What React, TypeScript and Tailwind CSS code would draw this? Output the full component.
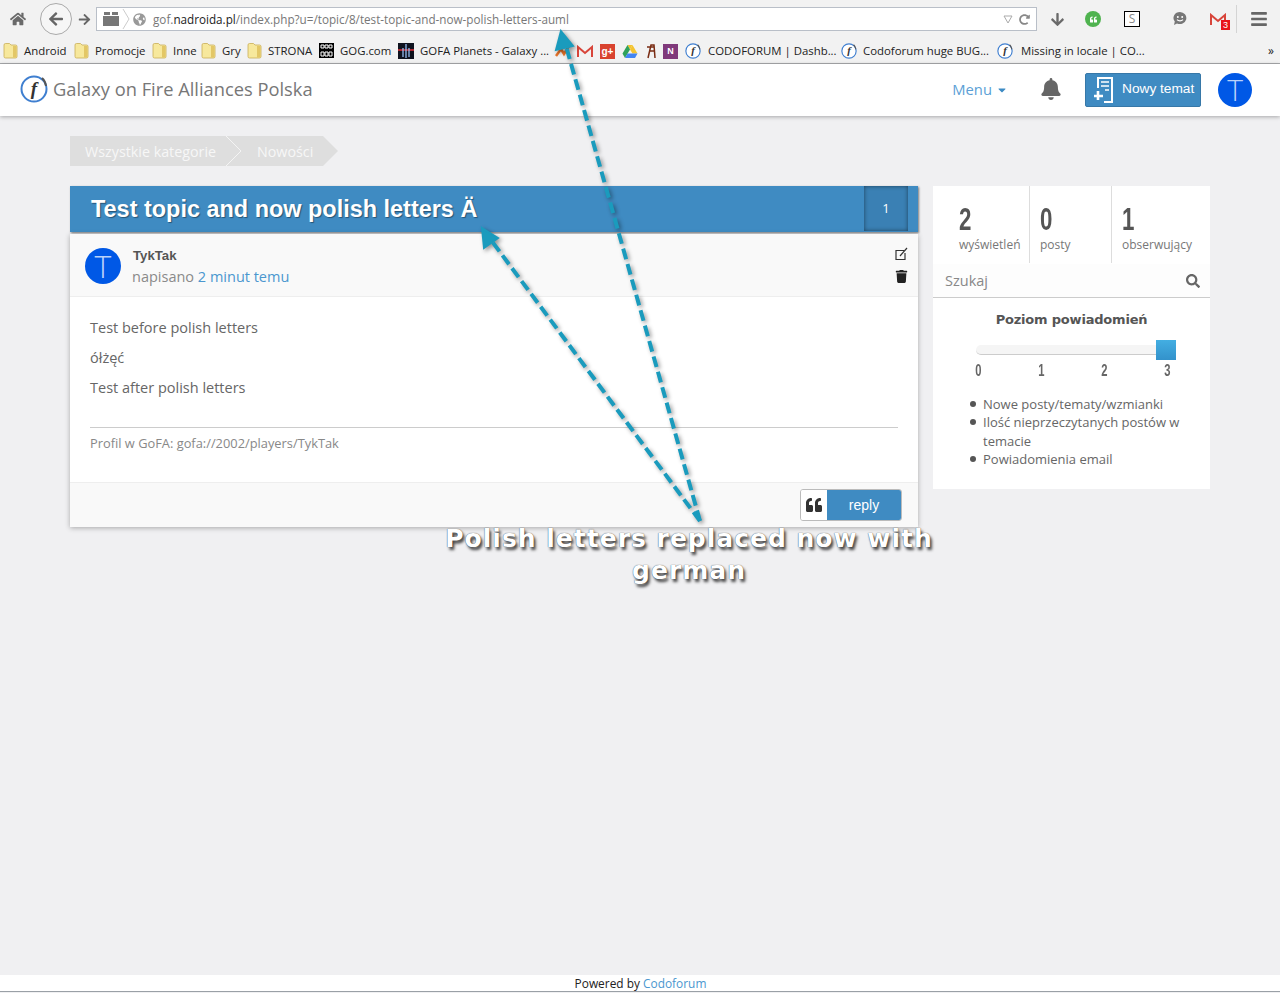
import React from 'react';
import { FaHome, FaArrowLeft, FaArrowRight, FaArrowDown, FaBell, FaSearch, FaTrash, FaQuoteLeft, FaBars, FaGlobeAmericas, FaCaretDown, FaRedoAlt } from 'react-icons/fa';

function Folder() {
  return (
    <svg width="15" height="17" viewBox="0 0 15 17" className="shrink-0">
      <path d="M1 3 Q1 1.5 2.5 1.5 H6.5 L8 3 H12.5 Q14 3 14 4.5 V14.5 Q14 16 12.5 16 H2.5 Q1 16 1 14.5 Z" fill="#f7e89c" stroke="#c9ad55" strokeWidth="0.8" />
      <path d="M10 4 H13.5 V15.5 H10 Z" fill="#e3c766" />
    </svg>
  );
}

function FIcon({ size = 16 }: { size?: number }) {
  return (
    <svg width={size} height={size} viewBox="0 0 28 28" className="shrink-0">
      <circle cx="14" cy="14" r="12.5" fill="#fff" stroke="#3f7fd0" strokeWidth="2" />
      <path d="M22 3 A12.5 12.5 0 0 1 26 11" fill="none" stroke="#555" strokeWidth="2" />
      <text x="14" y="20" textAnchor="middle" fontFamily="'Liberation Serif', serif" fontStyle="italic" fontWeight="700" fontSize="19" fill="#333">f</text>
    </svg>
  );
}

function GogIcon() {
  return (
    <svg width="15" height="15" viewBox="0 0 15 15" className="shrink-0">
      <rect width="15" height="15" fill="#000" />
      <path d="M2 2h3v3H2zM6 2h3v3H6zM10 2h3v3h-3zM2 9h3v4H2zM6 9h3v4H6zM10 9h3v4h-3z" fill="none" stroke="#fff" strokeWidth="1" />
    </svg>
  );
}

function GofaIcon() {
  return (
    <svg width="16" height="16" viewBox="0 0 16 16" className="shrink-0">
      <rect width="16" height="16" fill="#10131f" />
      <path d="M0 7h16" stroke="#e0323a" strokeWidth="1.5" />
      <path d="M8 1v14M5 5v9M11 5v9" stroke="#9fc8ff" strokeWidth="1.2" />
    </svg>
  );
}

function GmailIcon() {
  return (
    <svg width="16" height="13" viewBox="0 0 16 13" className="shrink-0">
      <path d="M1 12V2l7 6 7-6v10" fill="none" stroke="#d8453a" strokeWidth="2" />
    </svg>
  );
}

function Bookmark({ icon, label, w }: { icon: React.ReactNode; label: string; w: string }) {
  return (
    <div className={`flex items-center gap-[6px] ${w}`}>
      {icon}
      <span className="whitespace-nowrap">{label}</span>
    </div>
  );
}

function BrowserChrome() {
  return (
    <div className="h-[64px] bg-[#f2f2f2] border-b border-[#a9abad] font-['Open_Sans',sans-serif]">
      <div className="h-[38px] flex items-center">
        <FaHome className="ml-[10px] text-[#6a6a6a] text-[16px]" />
        <div className="ml-[14px] w-[32px] h-[32px] rounded-full border border-[#aaa] bg-[#f6f6f6] flex items-center justify-center">
          <FaArrowLeft className="text-[#666] text-[16px]" />
        </div>
        <FaArrowRight className="ml-[6px] text-[#666] text-[13px]" />
        <div className="ml-[5px] w-[941px] h-[24px] bg-white border border-[#b9bfc8] flex items-center text-[11.7px]">
          <svg width="16" height="14" viewBox="0 0 16 14" className="ml-[6px] shrink-0"><path d="M0 4h16v10H0zM1 0h6v3H1zM9 0h6v3H9z" fill="#777" /></svg>
          <svg width="8" height="22" viewBox="0 0 8 22" className="ml-[3px] shrink-0"><path d="M1 1l6 10-6 10" fill="none" stroke="#ccc" /></svg>
          <FaGlobeAmericas className="ml-[3px] text-[#999] text-[13px]" />
          <span className="ml-[7px] mt-[1px] whitespace-nowrap text-[#777]">gof.<span className="text-[#222]">nadroida.pl</span>/index.php?u=/topic/8/test-topic-and-now-polish-letters-auml</span>
          <svg width="10" height="9" viewBox="0 0 10 9" className="ml-auto shrink-0"><path d="M1 1h8L5 8z" fill="none" stroke="#aaa" /></svg>
          <FaRedoAlt className="ml-[6px] mr-[6px] text-[#888] text-[11px]" />
        </div>
        <FaArrowDown className="ml-[13px] text-[#6a6a6a] text-[15px]" />
        <div className="ml-[20px] w-[16px] h-[16px] rounded-full bg-[#4fb34f] flex items-center justify-center">
          <FaQuoteLeft className="text-white text-[7px]" />
        </div>
        <div className="ml-[23px] w-[16px] h-[16px] border border-black bg-white flex items-center justify-center text-[12px] leading-none text-[#888]">S</div>
        <svg width="16" height="16" viewBox="0 0 16 16" className="ml-[32px] shrink-0">
          <path d="M8 1a6.5 6 0 1 1-3 11.4L2 14l.8-3.4A6.5 6 0 0 1 8 1z" fill="#777" />
          <circle cx="5.8" cy="6" r="1" fill="#fff" /><circle cx="10.2" cy="6" r="1" fill="#fff" />
          <path d="M5 8.7c1.5 1.6 4.5 1.6 6 0" fill="none" stroke="#fff" strokeWidth="1.2" />
        </svg>
        <div className="relative ml-[22px]">
          <GmailIcon />
          <span className="absolute -right-[4px] -bottom-[4px] bg-[#e8141c] text-white text-[9px] leading-[10px] px-[2px] font-['Liberation_Sans']">3</span>
        </div>
        <div className="ml-[10px] w-px h-[28px] bg-[#d4d4d4]" />
        <FaBars className="ml-[13px] text-[#666] text-[18px]" />
      </div>
      <div className="h-[25px] flex items-center pt-[1px] text-[11.4px] text-[#222] pl-[3px] relative">
        <Bookmark icon={<Folder />} label="Android" w="w-[71px]" />
        <Bookmark icon={<Folder />} label="Promocje" w="w-[78px]" />
        <Bookmark icon={<Folder />} label="Inne" w="w-[49px]" />
        <Bookmark icon={<Folder />} label="Gry" w="w-[46px]" />
        <Bookmark icon={<Folder />} label="STRONA" w="w-[72px]" />
        <Bookmark icon={<GogIcon />} label="GOG.com" w="w-[79px]" />
        <Bookmark icon={<GofaIcon />} label="GOFA Planets - Galaxy ..." w="w-[157px]" />
        <div className="flex items-center gap-[7px]">
          <svg width="15" height="15" viewBox="0 0 15 15" className="shrink-0"><path d="M1 12L6 5l3 5 5-8" fill="none" stroke="#e8742a" strokeWidth="2.5" /></svg>
          <GmailIcon />
          <div className="w-[15px] h-[15px] bg-[#d9432f] text-white text-[10px] leading-[15px] text-center font-['Liberation_Sans'] font-bold">g+</div>
          <svg width="16" height="15" viewBox="0 0 16 15" className="shrink-0">
            <path d="M5.5 1h5L8 5.5 5.5 1z" fill="#f4c430" />
            <path d="M10.5 1L15.5 9.5h-5L8 5.5z" fill="#f4c430" />
            <path d="M5.5 1L8 5.5 3 14 .5 9.5z" fill="#2fa15a" />
            <path d="M3 14h10l2.5-4.5h-10z" fill="#4285f4" />
          </svg>
          <svg width="10" height="15" viewBox="0 0 10 15" className="ml-[1px] shrink-0"><path d="M2 14L5 1h3l1 13M3 7h5M1 3h7" fill="none" stroke="#7a2d14" strokeWidth="1.5" /></svg>
          <div className="w-[15px] h-[15px] bg-[#80397b] text-white text-[9px] leading-[15px] text-center font-bold font-['Liberation_Sans']">N</div>
          <FIcon />
        </div>
        <span className="ml-[7px] w-[133px] whitespace-nowrap">CODOFORUM | Dashb...</span>
        <FIcon />
        <span className="ml-[6px] w-[134px] whitespace-nowrap">Codoforum huge BUG...</span>
        <FIcon />
        <span className="ml-[8px] whitespace-nowrap">Missing in locale | CO...</span>
        <span className="ml-auto mr-[6px] text-[12px]">»</span>
      </div>
    </div>
  );
}

function ForumNav() {
  return (
    <div className="h-[52px] bg-white shadow-[0_1px_4px_rgba(0,0,0,0.3)] flex items-center font-['Open_Sans',sans-serif] relative">
      <div className="ml-[20px] mb-[2px]"><FIcon size={28} /></div>
      <span className="ml-[5px] mb-[2px] text-[18.3px] text-[#777]">Galaxy on Fire Alliances Polska</span>
      <div className="ml-auto flex items-center">
        <span className="mb-[2px] text-[14.8px] text-[#5b9fd6]">Menu</span>
        <FaCaretDown className="ml-[4px] text-[#3d8bc4] text-[12px]" />
        <FaBell className="ml-[32px] mb-[2px] text-[#666] text-[22px]" />
        <button className="ml-[23px] w-[116px] h-[34px] rounded-[2px] bg-[#3f8bc2] border border-[#3778a8] flex items-center text-white font-['Liberation_Sans',sans-serif] text-[13.7px]">
          <svg width="24" height="28" viewBox="0 0 24 28" className="ml-[6px] shrink-0">
            <path d="M6 12V2h14v24h-8" fill="none" stroke="#fff" strokeWidth="2" />
            <path d="M9 6h8M9 10h8M13 14h4" stroke="#fff" strokeWidth="1.6" />
            <path d="M6 15v9M2 20h9" stroke="#fff" strokeWidth="2.6" />
          </svg>
          <span className="ml-[6px] mb-[2px] whitespace-nowrap">Nowy temat</span>
        </button>
        <Avatar size="w-[34px] h-[34px] text-[30px] ml-[17px] mr-[28px]" />
      </div>
    </div>
  );
}

function Avatar({ size }: { size: string }) {
  return (
    <div className={`${size} shrink-0 rounded-full bg-[#0058e6] text-[#b9d2fa] flex items-center justify-center font-['Open_Sans',sans-serif] font-light leading-none`}>T</div>
  );
}

function Breadcrumbs() {
  return (
    <div className="flex h-[30px] text-[14.3px] text-[#f7f7f7]">
      <div className="relative w-[253px] bg-[#dedede] flex leading-[31px]">
        <span className="pl-[15px] w-[187px] whitespace-nowrap">Wszystkie kategorie</span>
        <span>Nowości</span>
        <svg width="16" height="30" viewBox="0 0 16 30" className="absolute left-[156px] top-0"><path d="M0 0l15 15L0 30" fill="none" stroke="#f4f4f4" /></svg>
      </div>
      <svg width="15" height="30" viewBox="0 0 15 30" className="shrink-0"><path d="M0 0l15 15L0 30z" fill="#dedede" /></svg>
    </div>
  );
}

function Post() {
  return (
    <div className="mt-[2px] bg-white shadow-[0_1px_5px_rgba(0,0,0,0.3)]">
      <div className="h-[63px] bg-[#f9f9f9] border-b border-[#eee] flex pl-[15px] pr-[10px]">
        <Avatar size="mt-[14px] w-[36px] h-[36px] text-[32px]" />
        <div className="ml-[11px] flex flex-col">
          <span className="mt-[13px] ml-[1px] text-[13.2px] leading-[18px] font-bold text-[#555] font-['Liberation_Sans',sans-serif]">TykTak</span>
          <span className="mt-[1px] text-[14.5px] leading-[22px] text-[#8a8a8a]">napisano <span className="text-[#4b97cf]">2 minut temu</span></span>
        </div>
        <div className="ml-auto flex flex-col items-center pt-[13px] gap-[9px]">
          <svg width="13" height="14" viewBox="0 0 13 14" className="shrink-0">
            <path d="M9 3.5H1v9h9V6" fill="none" stroke="#333" strokeWidth="1.2" />
            <path d="M5 9l7-8" stroke="#333" strokeWidth="1.2" />
          </svg>
          <FaTrash className="text-[#222] text-[13px]" />
        </div>
      </div>
      <div className="px-[20px] text-[14.5px] text-[#666]">
        <p className="mt-[20px] leading-[22px]">Test before polish letters</p>
        <p className="mt-[8px] leading-[22px]">ółżęć</p>
        <p className="mt-[8px] leading-[22px]">Test after polish letters</p>
        <div className="mt-[28px] border-t border-[#ccc]" />
        <p className="mt-[6px] text-[12.85px] leading-[18px] text-[#888]">Profil w GoFA: gofa://2002/players/TykTak</p>
      </div>
      <div className="mt-[30px] h-[45px] bg-[#f9f9f9] border-t border-[#eee] flex justify-end pt-[6px] pr-[16px]">
        <div className="flex h-[32px] w-[102px] rounded-[3px] border border-[#bbb] overflow-hidden">
          <div className="w-[26px] bg-white flex items-center justify-center"><FaQuoteLeft className="text-[#333] text-[16px]" /></div>
          <div className="flex-1 bg-[#3f8bc2] text-white text-[14px] font-['Liberation_Sans',sans-serif] flex items-center justify-center">reply</div>
        </div>
      </div>
    </div>
  );
}

function Stat({ n, label, w, pl }: { n: string; label: string; w: string; pl: string }) {
  return (
    <div className={`${w} ${pl} h-[77px] border-r border-[#ddd] last:border-r-0 pt-[16px]`}>
      <div className="text-[31px] leading-[36px] font-bold text-[#555] font-['Liberation_Sans',sans-serif] origin-left scale-x-[0.72]">{n}</div>
      <div className="text-[12px] leading-[14px] text-[#777] whitespace-nowrap">{label}</div>
    </div>
  );
}

function NoticeItem({ children }: { children: React.ReactNode }) {
  return (
    <li className="flex">
      <span className="mt-[6px] mr-[7px] w-[6px] h-[6px] rounded-full bg-[#555] shrink-0" />
      <span>{children}</span>
    </li>
  );
}

function Sidebar() {
  return (
    <div className="w-[277px] h-[303px] bg-white text-[#666]">
      <div className="flex h-[77px]">
        <Stat n="2" label="wyświetleń" w="w-[97px]" pl="pl-[26px]" />
        <Stat n="0" label="posty" w="w-[82px]" pl="pl-[10px]" />
        <Stat n="1" label="obserwujący" w="w-[98px]" pl="pl-[10px]" />
      </div>
      <div className="mt-[1px] h-[34px] border-b border-[#ccc] bg-[#fdfdfd] flex items-center pl-[12px] pr-[10px] text-[14.5px] text-[#888]">
        <span>Szukaj</span>
        <FaSearch className="ml-auto text-[#666] text-[14px]" />
      </div>
      <div className="mt-[12px] text-center text-[13px] leading-[20px] font-bold text-[#555] font-['DejaVu_Sans',sans-serif] tracking-[-0.2px]">Poziom powiadomień</div>
      <div className="mt-[10px] ml-[43px] w-[200px] h-[20px] flex items-center relative">
        <div className="w-full h-[10px] rounded-[5px] bg-[#f5f5f5] border-b border-[#ccc]" />
        <div className="absolute right-0 top-0 w-[20px] h-[20px] bg-gradient-to-b from-[#43aee2] to-[#3392cb]" />
      </div>
      <div className="mt-[1px] ml-[41px] w-[198px] flex justify-between text-[16px] leading-[20px] font-bold text-[#666] font-['Liberation_Sans',sans-serif]">
        <span className="scale-x-[0.7]">0</span><span className="scale-x-[0.7]">1</span><span className="scale-x-[0.7]">2</span><span className="scale-x-[0.7]">3</span>
      </div>
      <ul className="mt-[14px] pl-[37px] pr-[28px] text-[13px] leading-[18.4px]">
        <NoticeItem>Nowe posty/tematy/wzmianki</NoticeItem>
        <NoticeItem>Ilość nieprzeczytanych postów w temacie</NoticeItem>
        <NoticeItem>Powiadomienia email</NoticeItem>
      </ul>
    </div>
  );
}

function Annotation() {
  // arrows and caption sit over the page, as in the annotated screenshot
  return (
    <>
      <svg width="1280" height="993" className="absolute left-0 top-0 pointer-events-none drop-shadow-[2px_2px_2px_rgba(0,0,0,0.4)]">
        <path d="M700 521 L566 46" stroke="#1a9bbd" strokeWidth="4" strokeDasharray="11 5" fill="none" />
        <path d="M700 521 L491 240" stroke="#1a9bbd" strokeWidth="4" strokeDasharray="11 5" fill="none" />
        <path d="M561 31 L573 46 L556 50 Z" fill="#1a9bbd" stroke="#1a9bbd" strokeWidth="2" />
        <path d="M482 228 L498 238 L484 248 Z" fill="#1a9bbd" stroke="#1a9bbd" strokeWidth="2" />
      </svg>
      <div className="absolute left-[429px] top-[523px] w-[520px] text-center text-[25px] leading-[32px] font-bold text-white tracking-[1px] font-['DejaVu_Sans',sans-serif] [text-shadow:0_0_1px_#222,2px_3px_3px_rgba(0,0,0,0.7)]">
        Polish letters replaced now with german
      </div>
    </>
  );
}

export default function App() {
  return (
    <div className="relative w-[1280px] h-[993px] overflow-hidden bg-[#f0f0f2] flex flex-col font-['Open_Sans',sans-serif]">
      <BrowserChrome />
      <ForumNav />
      <div className="flex-1 pl-[70px] pt-[20px]">
        <Breadcrumbs />
        <div className="mt-[20px] flex items-start">
          <div className="w-[848px]">
            <div className="h-[46px] bg-[#3f8bc2] shadow-[1px_1px_2px_rgba(0,0,0,0.5)] flex items-start pl-[21px] pr-[10px]">
              <h1 className="mt-[7px] text-[23.45px] leading-[32px] font-bold text-white font-['Liberation_Sans',sans-serif] [text-shadow:1px_1px_1px_rgba(0,0,0,0.4)]">Test topic and now polish letters Ä</h1>
              <div className="ml-auto w-[44px] h-[45px] bg-[#3a80b4] shadow-[inset_0_0_4px_rgba(0,0,0,0.5)] flex items-center justify-center text-white text-[13px]">1</div>
            </div>
            <Post />
          </div>
          <div className="ml-[15px]"><Sidebar /></div>
        </div>
      </div>
      <div className="h-[17px] mb-[1px] bg-white border-b border-[#9aa0a6] text-center text-[11.9px] leading-[17px] text-[#222] pl-[1px]">
        Powered by <span className="text-[#4b97cf]">Codoforum</span>
      </div>
      <Annotation />
    </div>
  );
}
